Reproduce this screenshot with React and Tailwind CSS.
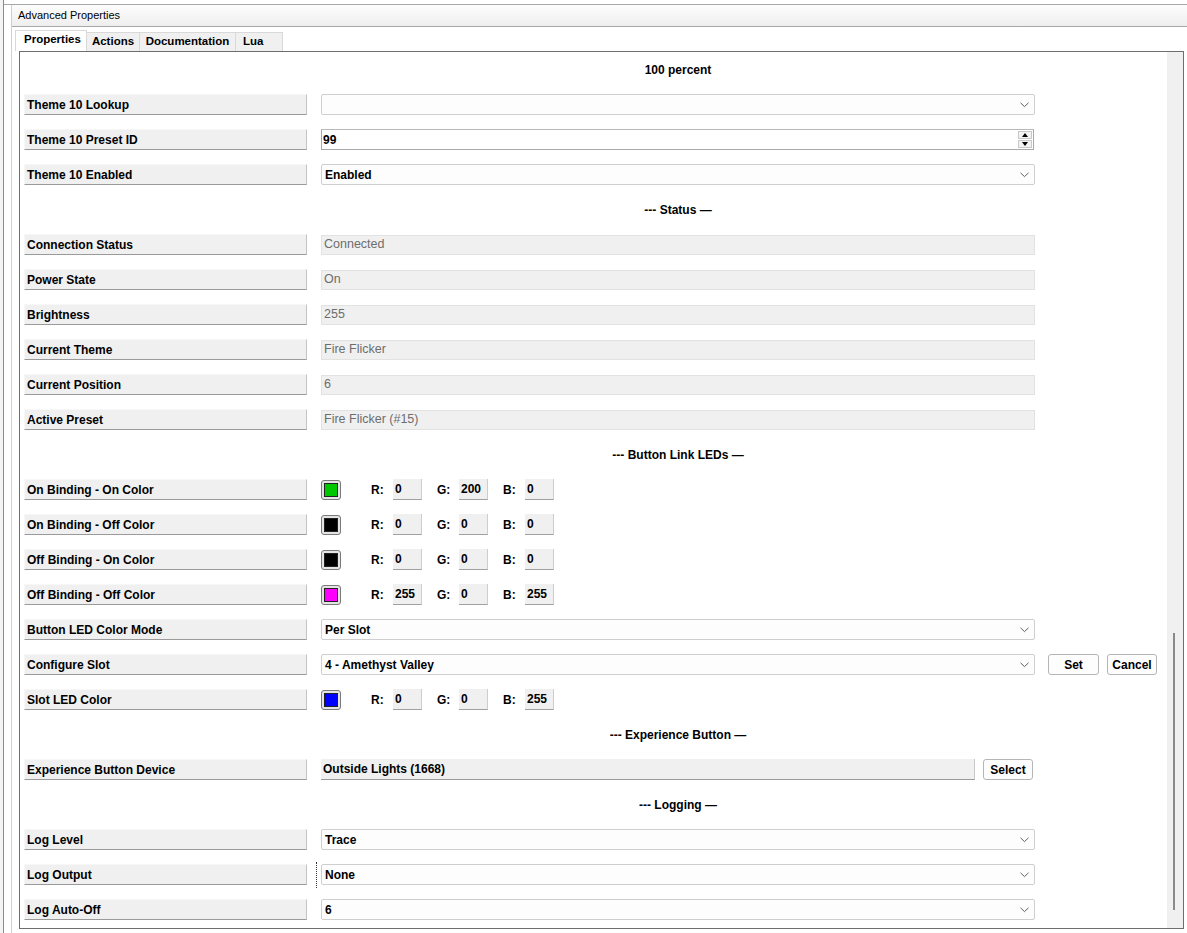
import React from "react";

const rows = [
  { type: "header", text: "100 percent" },
  { type: "select", label: "Theme 10 Lookup", value: "" },
  { type: "number", label: "Theme 10 Preset ID", value: "99" },
  { type: "select", label: "Theme 10 Enabled", value: "Enabled" },
  { type: "header", text: "--- Status \u2014" },
  { type: "readonly", label: "Connection Status", value: "Connected" },
  { type: "readonly", label: "Power State", value: "On" },
  { type: "readonly", label: "Brightness", value: "255" },
  { type: "readonly", label: "Current Theme", value: "Fire Flicker" },
  { type: "readonly", label: "Current Position", value: "6" },
  { type: "readonly", label: "Active Preset", value: "Fire Flicker (#15)" },
  { type: "header", text: "--- Button Link LEDs \u2014" },
  { type: "color", label: "On Binding - On Color", rgb: [0, 200, 0] },
  { type: "color", label: "On Binding - Off Color", rgb: [0, 0, 0] },
  { type: "color", label: "Off Binding - On Color", rgb: [0, 0, 0] },
  { type: "color", label: "Off Binding - Off Color", rgb: [255, 0, 255] },
  { type: "select", label: "Button LED Color Mode", value: "Per Slot" },
  { type: "slot", label: "Configure Slot", value: "4 - Amethyst Valley" },
  { type: "color", label: "Slot LED Color", rgb: [0, 0, 255] },
  { type: "header", text: "--- Experience Button \u2014" },
  { type: "device", label: "Experience Button Device", value: "Outside Lights (1668)" },
  { type: "header", text: "--- Logging \u2014" },
  { type: "select", label: "Log Level", value: "Trace" },
  { type: "select", label: "Log Output", value: "None", focus: true },
  { type: "select", label: "Log Auto-Off", value: "6" },
];

function Chevron() {
  return (
    <svg width="9" height="6" viewBox="0 0 9 6" className="shrink-0">
      <polyline points="0.5,0.8 4.5,4.6 8.5,0.8" fill="none" stroke="#606060" strokeWidth="1" />
    </svg>
  );
}

function Label({ text }) {
  return (
    <div className="w-[283px] h-[21px] shrink-0 bg-[#f0f0f0] border-t border-l border-t-[#f7f7f7] border-l-[#f7f7f7] border-b border-r border-b-[#9a9a9a] border-r-[#c4c4c4] flex items-center pl-[2px] text-[12px] font-bold text-black">
      {text}
    </div>
  );
}

function Select({ value, width = "w-[714px]" }) {
  return (
    <div className={`${width} h-[21px] shrink-0 bg-[#fdfdfd] border border-[#cfcfcf] rounded-[2px] flex items-center justify-between pl-[3px] pr-[5px] text-[12px] font-bold text-black`}>
      <span>{value}</span>
      <Chevron />
    </div>
  );
}

function Swatch({ rgb }) {
  return (
    <div className="w-[20px] h-[20px] shrink-0 border border-[#7a7a7a] rounded-[3px] bg-[#e4e4e4] p-[2px]">
      <div className="w-full h-full border border-[#222]" style={{ backgroundColor: `rgb(${rgb[0]},${rgb[1]},${rgb[2]})` }} />
    </div>
  );
}

function Channel({ name, value, first }) {
  return (
    <div className={`flex items-center ${first ? "ml-[30px]" : "ml-[15px]"}`}>
      <span className="w-[22px] text-[12px] font-bold text-black">{name}:</span>
      <div className="w-[29px] h-[21px] bg-[#f0f0f0] border-b border-r border-b-[#a0a0a0] border-r-[#cdcdcd] flex items-center pl-[2px] text-[12px] font-bold text-black">
        {value}
      </div>
    </div>
  );
}

function Button({ text, width }) {
  return (
    <div className={`${width} h-[21px] shrink-0 bg-[#fdfdfd] border border-[#b5b5b5] rounded-[3px] flex items-center justify-center text-[12px] font-bold text-black`}>
      {text}
    </div>
  );
}

function Row({ row }) {
  if (row.type === "header") {
    return (
      <div className="h-[35px] flex items-center">
        <div className="w-[301px] shrink-0" />
        <div className="w-[714px] text-center text-[12px] font-bold text-black">{row.text}</div>
      </div>
    );
  }
  return (
    <div className="h-[35px] flex items-center pl-[4px]">
      <Label text={row.label} />
      {row.focus ? (
        <div className="flex items-center w-[14px] shrink-0">
          <div className="ml-[9px] h-[26px] border-l border-dotted border-[#333]" />
        </div>
      ) : (
        <div className="w-[14px] shrink-0" />
      )}
      {row.type === "select" && <Select value={row.value} />}
      {row.type === "number" && (
        <div className="w-[713px] h-[21px] shrink-0 bg-white border border-[#a8a8a8] border-t-[#b8b8b8] flex items-center justify-between pl-[1px] pr-[1px] text-[12px] font-bold text-black">
          <span>{row.value}</span>
          <div className="flex flex-col gap-[1px]">
            <div className="w-[14px] h-[8px] bg-[#f3f3f3] border border-[#c8c8c8] flex items-center justify-center">
              <svg width="6" height="4" viewBox="0 0 6 4"><polygon points="3,0 6,4 0,4" fill="#000" /></svg>
            </div>
            <div className="w-[14px] h-[8px] bg-[#f3f3f3] border border-[#c8c8c8] flex items-center justify-center">
              <svg width="6" height="4" viewBox="0 0 6 4"><polygon points="0,0 6,0 3,4" fill="#000" /></svg>
            </div>
          </div>
        </div>
      )}
      {row.type === "readonly" && (
        <div className="w-[714px] h-[20px] shrink-0 bg-[#f0f0f0] border border-[#e2e2e2] flex items-center pl-[2px] text-[12.5px] text-[#6d6d6d]">
          {row.value}
        </div>
      )}
      {row.type === "color" && (
        <div className="flex items-center">
          <Swatch rgb={row.rgb} />
          <Channel name="R" value={row.rgb[0]} first />
          <Channel name="G" value={row.rgb[1]} />
          <Channel name="B" value={row.rgb[2]} />
        </div>
      )}
      {row.type === "slot" && (
        <div className="flex items-center">
          <Select value={row.value} />
          <div className="ml-[13px]"><Button text="Set" width="w-[51px]" /></div>
          <div className="ml-[8px]"><Button text="Cancel" width="w-[50px]" /></div>
        </div>
      )}
      {row.type === "device" && (
        <div className="flex items-center">
          <div className="w-[654px] h-[21px] shrink-0 bg-[#f0f0f0] border-b border-r border-b-[#9a9a9a] border-r-[#c8c8c8] flex items-center pl-[2px] text-[12px] font-bold text-black">
            {row.value}
          </div>
          <div className="ml-[8px]"><Button text="Select" width="w-[50px]" /></div>
        </div>
      )}
    </div>
  );
}

export default function App() {
  return (
    <div className="w-[1187px] h-[933px] bg-white overflow-hidden flex font-['Liberation_Sans',Arial,sans-serif]">
      {/* left neighbour panel edge */}
      <div className="w-[4px] h-full bg-[#f4f4f4] border-r border-[#8a8a8a] shrink-0" />
      <div className="flex-1 flex flex-col">
        <div className="h-[5px] border-b border-[#a8a8a8] shrink-0" />
        <div className="flex-1 flex">
          <div className="w-[7px] shrink-0" />
          <div className="flex-1 flex flex-col border-l border-[#d0d0d0]">
            {/* title bar */}
            <div className="h-[22px] shrink-0 bg-gradient-to-b from-[#fdfdfd] to-[#eeeeee] border-b border-[#a8a8a8] flex items-center pl-[6px] text-[11px] text-black">
              Advanced Properties
            </div>
            {/* tabs */}
            <div className="h-[24px] shrink-0 flex items-end pl-[3px]">
              <div className="h-[21px] w-[72px] bg-white border border-b-0 border-[#d9d9d9] flex items-center pl-[8px] pb-[2px] text-[11.5px] font-bold text-black">
                Properties
              </div>
              <div className="h-[19px] w-[53px] bg-[#f0f0f0] border-t border-r border-[#d9d9d9] flex items-center justify-center text-[11.5px] font-bold text-black">
                Actions
              </div>
              <div className="h-[19px] w-[96px] bg-[#f0f0f0] border-t border-r border-[#d9d9d9] flex items-center justify-center text-[11.5px] font-bold text-black">
                Documentation
              </div>
              <div className="h-[19px] w-[47px] bg-[#f0f0f0] border-t border-r border-[#d9d9d9] flex items-center pl-[7px] text-[11.5px] font-bold text-black">
                Lua
              </div>
            </div>
            {/* tab panel */}
            <div className="ml-[7px] w-[1165px] h-[878px] border border-[#6e6e6e] flex">
              <div className="flex-1 flex flex-col">
                {rows.map((row, i) => (
                  <Row key={i} row={row} />
                ))}
              </div>
              <div className="w-[16px] h-full bg-[#f0f0f0] relative">
                <div className="absolute left-[6px] top-[581px] w-[2px] h-[277px] bg-[#8a8a8a]" />
              </div>
            </div>
          </div>
        </div>
      </div>
    </div>
  );
}
